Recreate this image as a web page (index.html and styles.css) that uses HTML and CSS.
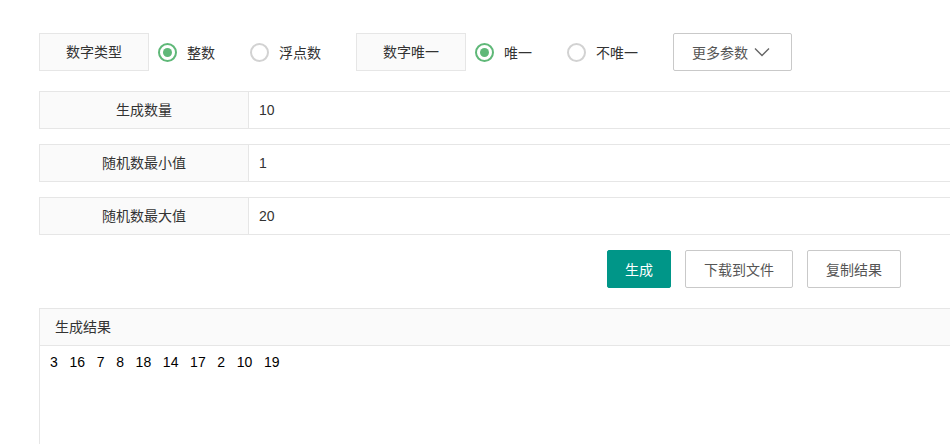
FILE: index.html
```html
<!DOCTYPE html>
<html>
	<head>
		<meta charset="utf-8">
		<title>随机数生成</title>
		<meta name="viewport" content="width=device-width, initial-scale=1.0">
		<link rel="stylesheet" href="styles.css">
	</head>
	<body>
		<div class="page">
			<div class="options">
				<div class="opt-label">数字类型</div>
				<label class="radio checked"><span class="dot"></span>整数</label>
				<label class="radio"><span class="dot"></span>浮点数</label>
				<div class="opt-label">数字唯一</div>
				<label class="radio checked"><span class="dot"></span>唯一</label>
				<label class="radio"><span class="dot"></span>不唯一</label>
				<button class="btn more">更多参数
					<svg width="16" height="10" viewBox="0 0 16 10"><path d="M1 1.5 L8 8.5 L15 1.5" fill="none" stroke="#666" stroke-width="1.4"/></svg>
				</button>
			</div>

			<div class="field">
				<div class="field-label">生成数量</div>
				<div class="field-input">10</div>
			</div>
			<div class="field">
				<div class="field-label">随机数最小值</div>
				<div class="field-input">1</div>
			</div>
			<div class="field">
				<div class="field-label">随机数最大值</div>
				<div class="field-input">20</div>
			</div>

			<div class="actions">
				<button class="btn primary">生成</button>
				<button class="btn">下载到文件</button>
				<button class="btn">复制结果</button>
			</div>

			<div class="result">
				<div class="result-head">生成结果</div>
				<div class="result-body">3   16   7   8   18   14   17   2   10   19</div>
			</div>
		</div>
	</body>
</html>
```

FILE: styles.css
```css
html, body {
	margin: 0;
	overflow: hidden;
}

body {
	font-family: "Liberation Sans", "Noto Sans CJK SC", sans-serif;
	font-size: 14px;
	color: #333333;
	background-color: #ffffff;
}

.page {
	padding: 33px 0 0 39px;
	width: 1000px;
}

.options {
	display: flex;
	align-items: center;
	height: 38px;
}

.opt-label {
	box-sizing: border-box;
	width: 110px;
	height: 38px;
	line-height: 36px;
	text-align: center;
	background-color: #fafafa;
	border: 1px solid #e6e6e6;
	margin-right: 9px;
}

.radio {
	display: flex;
	align-items: center;
	margin-right: 35px;
}

.radio .dot {
	box-sizing: border-box;
	width: 19px;
	height: 19px;
	border: 2px solid #d2d2d2;
	border-radius: 50%;
	margin-right: 10px;
	display: flex;
	align-items: center;
	justify-content: center;
}

.radio.checked .dot {
	border-color: #5fb878;
}

.radio.checked .dot::after {
	content: "";
	width: 9px;
	height: 9px;
	border-radius: 50%;
	background-color: #5fb878;
}

.btn {
	box-sizing: border-box;
	height: 38px;
	padding: 0 18px;
	font-family: inherit;
	font-size: 14px;
	color: #555555;
	background-color: #ffffff;
	border: 1px solid #c9c9c9;
	border-radius: 2px;
	cursor: pointer;
}

.btn.more {
	display: flex;
	align-items: center;
	gap: 6px;
	width: 119px;
}

.btn.primary {
	color: #ffffff;
	background-color: #009688;
	border-color: #009688;
	width: 64px;
	padding: 0;
}

.field {
	display: flex;
	height: 38px;
	box-sizing: border-box;
	border: 1px solid #e6e6e6;
	margin-top: 15px;
}

.options + .field {
	margin-top: 20px;
}

.field-label {
	width: 208px;
	line-height: 36px;
	text-align: center;
	background-color: #fafafa;
	border-right: 1px solid #e6e6e6;
}

.field-input {
	flex: 1;
	line-height: 36px;
	padding-left: 10px;
}

.actions {
	display: flex;
	gap: 14px;
	margin: 15px 0 0 568px;
}

.actions .btn:nth-child(2) {
	width: 108px;
	padding: 0;
}

.actions .btn:nth-child(3) {
	width: 94px;
	padding: 0;
}

.result {
	margin-top: 20px;
	border: 1px solid #e6e6e6;
	height: 200px;
}

.result-head {
	height: 36px;
	line-height: 36px;
	padding-left: 15px;
	background-color: #fafafa;
	border-bottom: 1px solid #e6e6e6;
}

.result-body {
	white-space: pre;
	padding: 6px 10px;
	line-height: 20px;
	color: #000000;
}
```
